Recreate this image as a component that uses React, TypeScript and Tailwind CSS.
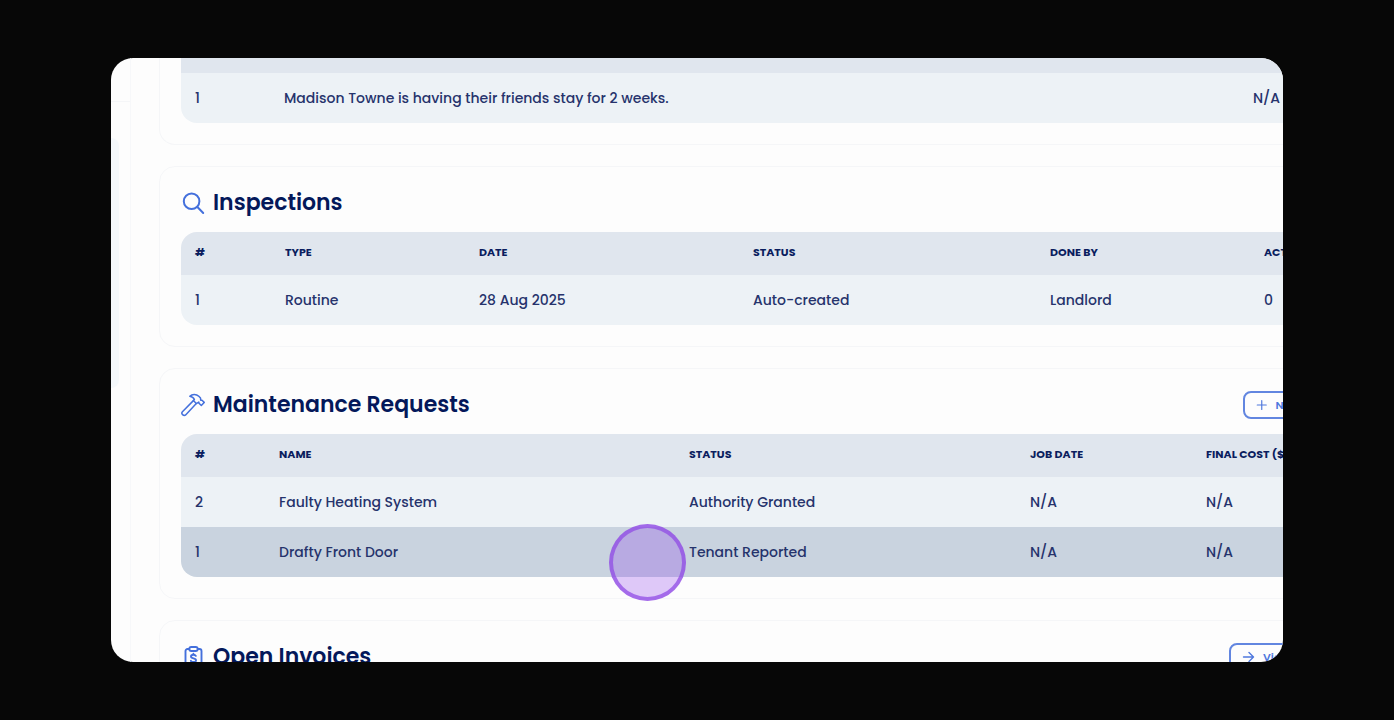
import type { ReactNode } from "react";

type Row = { cells: string[]; active?: boolean };

function SearchIcon() {
  return (
    <svg aria-hidden="true" width="24" height="24" viewBox="0 0 24 24" fill="none" stroke="currentColor" strokeWidth="2" strokeLinecap="round">
      <circle cx="10.6" cy="10.2" r="7.8" />
      <path d="M16.4 16l5.800 6" />
    </svg>
  );
}

function HammerIcon() {
  return (
    <svg aria-hidden="true" width="24" height="24" viewBox="0 0 24 24" fill="none" stroke="currentColor" strokeWidth="1.5" strokeLinecap="round" strokeLinejoin="round">
      <path d="M12.4 7.6L1.4 18.8a1.9 1.9 0 0 0 0 2.6l.5.5a1.9 1.9 0 0 0 2.7 0L15.3 10.6" />
      <path d="M8.8 3.2C11 1 15.3.8 17.8 3.300L19.500 5L19.700 7.200L21 7.200L23.200 9.400L20.300 12.500L18 10.300L17.800 9.100L15.300 10.600L12.400 7.600L13.400 6.500C12.600 4.600 10.700 3.500 8.800 3.200Z" />
    </svg>
  );
}

function InvoiceIcon() {
  return (
    <svg aria-hidden="true" width="24" height="24" viewBox="0 0 24 24" fill="none" stroke="currentColor" strokeWidth="1.9" strokeLinecap="round" strokeLinejoin="round">
      <path d="M8 4H6.500a2 2 0 0 0-2 2v14a2 2 0 0 0 2 2h12a2 2 0 0 0 2-2V6a2 2 0 0 0-2-2H17" />
      <rect x="8.300" y="2" width="8.400" height="4" rx="2" />
      <path d="M14.800 10.800c-.4-.8-1.300-1.100-2.400-1.100-1.400 0-2.400.7-2.400 1.800 0 2.500 5 1.100 5 3.700 0 1.100-1.100 1.800-2.500 1.800-1.200 0-2.200-.4-2.600-1.200M12.400 8.700v1M12.400 17v1.200" />
    </svg>
  );
}

function PlusIcon() {
  return (
    <svg aria-hidden="true" width="14" height="14" viewBox="0 0 14 14" fill="none" stroke="currentColor" strokeWidth="1.3" strokeLinecap="round">
      <path d="M7.500 2v10M2.500 7h10" />
    </svg>
  );
}

function ArrowIcon() {
  return (
    <svg aria-hidden="true" width="14" height="14" viewBox="0 0 14 14" fill="none" stroke="currentColor" strokeWidth="1.4" strokeLinecap="round" strokeLinejoin="round">
      <path d="M2.500 7h10M8 2.500L12.500 7L8 11.500" />
    </svg>
  );
}

function Card({ icon, title, action, children }: { icon: ReactNode; title: string; action?: ReactNode; children?: ReactNode }) {
  return (
    <section className="rounded-2xl border border-[#f5f6f8] px-[21px] pt-[22px] pb-[21px]">
      <div className="mb-[15px] flex h-7 items-center gap-2">
        <span className="text-[#4470dc]">{icon}</span>
        <h2 className="text-[22px] leading-7 font-semibold text-[#04185a]">{title}</h2>
        {action && <div className="ml-auto">{action}</div>}
      </div>
      {children}
    </section>
  );
}

function DataTable({ label, widths, head, rows }: { label: string; widths: number[]; head?: string[]; rows: Row[] }) {
  return (
    <div className={head ? "overflow-hidden rounded-2xl" : "overflow-hidden rounded-b-2xl"}>
      <table aria-label={label} className="w-full table-fixed border-collapse text-left">
        <colgroup>
          {widths.map((w, i) => (
            <col key={i} style={{ width: w }} />
          ))}
          <col />
        </colgroup>
        <thead className="bg-[#e0e6ee]">
          {head ? (
            <tr className="h-[43px]">
              {head.map((h) => (
                <th key={h} scope="col" className="pb-[3px] pl-[14px] text-[11px] leading-4 font-bold whitespace-nowrap text-[#0a1d5e]">
                  {h}
                </th>
              ))}
            </tr>
          ) : (
            <tr className="h-[15px]">
              <td colSpan={widths.length + 1} />
            </tr>
          )}
        </thead>
        <tbody>
          {rows.map((r) => (
            <tr key={r.cells[0]} className={r.active ? "h-[50px] bg-[#c9d3df]" : "h-[50px] bg-[#edf2f6]"}>
              {r.cells.map((c, i) => (
                <td key={i} className="pl-[14px] text-[14px] leading-5 font-medium whitespace-nowrap text-[#26336c]">
                  {c}
                </td>
              ))}
            </tr>
          ))}
        </tbody>
      </table>
    </div>
  );
}

function ActionButton({ icon, wide, children }: { icon: ReactNode; wide?: boolean; children: ReactNode }) {
  return (
    <button
      type="button"
      className={`flex h-7 items-center gap-2 rounded-lg border-2 border-[#6286e0] px-[10px] text-[11px] font-semibold whitespace-nowrap text-[#4f78dd] ${wide ? "w-[131px]" : "w-[117px]"}`}
    >
      {icon}
      {children}
    </button>
  );
}

export default function App() {
  return (
    <div className="h-screen overflow-hidden bg-[#070707] px-[111px] py-[58px] font-['Poppins','Inter',sans-serif]">
      <div className="relative flex h-full overflow-hidden rounded-[22px] bg-[#fdfdfd]">
        <aside className="w-5 shrink-0 border-r border-[#f7f8fa]">
          <div className="h-11 border-b border-[#f5f6f8]" />
          <div className="mt-9 mr-[11px] h-[250px] rounded-r-xl bg-[#f4f8fb]" />
        </aside>
        <main className="ml-7 flex min-w-[1223px] flex-1 flex-col gap-[21px]">
          <section className="rounded-b-2xl border border-t-0 border-[#f5f6f8] px-[21px] pb-[21px]">
            <DataTable
              label="Notes"
              widths={[89, 969]}
              rows={[{ cells: ["1", "Madison Towne is having their friends stay for 2 weeks.", "N/A"] }]}
            />
          </section>
          <Card icon={<SearchIcon />} title="Inspections">
            <DataTable
              label="Inspections"
              widths={[90, 194, 274, 297, 214]}
              head={["#", "TYPE", "DATE", "STATUS", "DONE BY", "ACTIONS"]}
              rows={[{ cells: ["1", "Routine", "28 Aug 2025", "Auto-created", "Landlord", "0"] }]}
            />
          </Card>
          <Card icon={<HammerIcon />} title="Maintenance Requests" action={<ActionButton icon={<PlusIcon />}>New Request</ActionButton>}>
            <DataTable
              label="Maintenance Requests"
              widths={[84, 410, 341, 176]}
              head={["#", "NAME", "STATUS", "JOB DATE", "FINAL COST ($)"]}
              rows={[
                { cells: ["2", "Faulty Heating System", "Authority Granted", "N/A", "N/A"] },
                { cells: ["1", "Drafty Front Door", "Tenant Reported", "N/A", "N/A"], active: true },
              ]}
            />
          </Card>
          <Card icon={<InvoiceIcon />} title="Open Invoices" action={<ActionButton icon={<ArrowIcon />} wide>View Invoices</ActionButton>} />
        </main>
        <div className="pointer-events-none absolute top-[466px] left-[498px] size-[77px] rounded-full border-4 border-[rgba(144,75,228,0.75)] bg-[rgba(140,60,235,0.27)]" />
      </div>
    </div>
  );
}
